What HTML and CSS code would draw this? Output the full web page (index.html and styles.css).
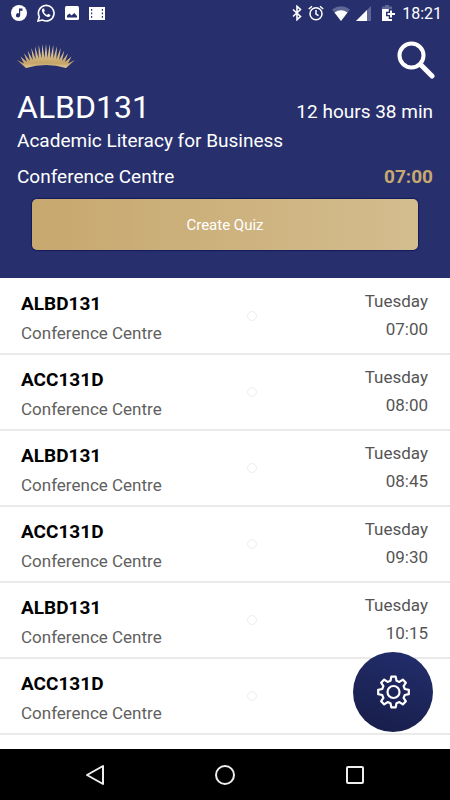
FILE: index.html
```html
<!DOCTYPE html>
<html lang="en">
<head>
<meta charset="utf-8">
<meta name="viewport" content="width=device-width, initial-scale=1">
<title>Timetable</title>
<link rel="stylesheet" href="styles.css">
</head>
<body>
<header class="top">
  <div class="status">
    <div class="status-group status-left">
      <svg width="16" height="16" viewBox="0 0 16 16"><circle cx="8" cy="8" r="8" fill="#fff"/><path d="M8 3.500h3.500v2.200H9.200v4.600a2.100 2.100 0 1 1-1.200-1.900z" fill="#27306d"/></svg>
      <svg width="18" height="18" viewBox="0 0 18 18"><path d="M1 17l1.300-4.200A7.800 7.800 0 1 1 5.400 16z" fill="none" stroke="#fff" stroke-width="1.600"/><path d="M6 4.600c-1 .6-1.300 1.600-.9 2.800 1 2.700 3 4.700 5.700 5.500 1.400.3 2.500-.4 2.700-1.900l-2.300-1.200-1.100 1.300c-1.500-.6-2.500-1.600-3.200-3l.9-1.100L7 4.600z" fill="#fff"/></svg>
      <svg width="14" height="14" viewBox="0 0 14 14"><rect width="14" height="14" rx="1.500" fill="#fff"/><path d="M2 11.500v-2L4.500 7.500l2 2L9.300 7l2.700 3v1.500z" fill="#27306d"/></svg>
      <svg width="16" height="13" viewBox="0 0 16 13"><path d="M0 0h16v13H0z" fill="#fff"/><path d="M2 2h1.200v1.700H2zM2 5.500h1.200v1.700H2zM2 9h1.200v1.700H2zM12.800 2H14v1.700h-1.200zM12.800 5.500H14v1.700h-1.200zM12.800 9H14v1.700h-1.200z" fill="#27306d"/></svg>
    </div>
    <div class="status-group status-right">
      <svg width="10" height="16" viewBox="0 0 10 16" fill="none" stroke="#fff" stroke-width="1.600"><path d="M1 4.500l7.500 7L5 14.700V1.300l3.500 3.200-7.500 7"/></svg>
      <svg width="16" height="16" viewBox="0 0 16 16" fill="none" stroke="#fff" stroke-width="1.500"><circle cx="8" cy="8.700" r="6"/><path d="M.8 4L4 1.200M15.200 4L12 1.200M8 5v4l2.500 1.700"/></svg>
      <svg class="wifi" width="18" height="15" viewBox="0 0 18 15"><path d="M0 3.500Q9-3.200 18 3.500L9 15z" fill="#5f6794"/><path d="M2.500 6.600Q9 1.800 15.500 6.600L9 15z" fill="#fff"/></svg>
      <svg width="15" height="15" viewBox="0 0 15 15"><path d="M0 15L15 0v15z" fill="#5f6794"/><path d="M0 15L11 4v11z" fill="#fff"/></svg>
      <svg class="battery" width="14" height="16" viewBox="0 0 14 16"><path d="M3 0h4v1.500h3V4H0V1.500h3z" fill="#5f6794"/><path d="M0 4h10v12H0z" fill="#fff"/><path d="M9 4v10M4 9h10" stroke="#27306d" stroke-width="4.500"/><path d="M9 5.500v7M5.500 9h7.500" stroke="#fff" stroke-width="2"/></svg>
      <time class="clock">18:21</time>
    </div>
  </div>

  <div class="brand">
    <svg class="logo" width="60" height="26" viewBox="0 0 60 26" role="img" aria-label="Sunrise logo">
      <defs><linearGradient id="gold" x1="0" y1="0" x2="0" y2="1"><stop offset="0" stop-color="#e6d6b0"/><stop offset=".8" stop-color="#c6a468"/><stop offset="1" stop-color="#e0cb9c"/></linearGradient></defs>
      <path fill="url(#gold)" d="M10 25L1 17 8 20.500 4.500 13.400 11 19 8 10.200 14 17.900 11.700 7.400 16.800 17 15.300 5.100 19.700 16.200 19 3.300 22.600 15.600 22.700 2 25.600 15.200 26.300 1.300 28.500 15 30 1 31.500 15 33.700 1.300 34.400 15.200 37.300 2 37.400 15.600 41 3.300 40.300 16.200 44.700 5.100 43.200 17 48.300 7.400 46 17.900 52 10.200 49 19 55.500 13.400 52 20.500 59 17 50 25Q30 19 10 25z"/>
    </svg>
    <button class="icon-button" type="button" aria-label="Search">
      <svg width="38" height="38" viewBox="0 0 38 38" fill="none" stroke="#fff"><circle cx="14.500" cy="14.500" r="12" stroke-width="4"/><path d="M23.500 23.500L35 35" stroke-width="5" stroke-linecap="round"/></svg>
    </button>
  </div>

  <div class="line headline"><h1>ALBD131</h1><span>12 hours 38 min</span></div>
  <p class="subject">Academic Literacy for Business</p>
  <div class="line venue"><span>Conference Centre</span><time class="next-time">07:00</time></div>
  <button class="create" type="button">Create Quiz</button>
</header>

<main>
  <ul class="list">
    <li class="row"><div><h2>ALBD131</h2><p>Conference Centre</p></div><i class="dot"></i><div class="when"><span>Tuesday</span><time>07:00</time></div></li>
    <li class="row"><div><h2>ACC131D</h2><p>Conference Centre</p></div><i class="dot"></i><div class="when"><span>Tuesday</span><time>08:00</time></div></li>
    <li class="row"><div><h2>ALBD131</h2><p>Conference Centre</p></div><i class="dot"></i><div class="when"><span>Tuesday</span><time>08:45</time></div></li>
    <li class="row"><div><h2>ACC131D</h2><p>Conference Centre</p></div><i class="dot"></i><div class="when"><span>Tuesday</span><time>09:30</time></div></li>
    <li class="row"><div><h2>ALBD131</h2><p>Conference Centre</p></div><i class="dot"></i><div class="when"><span>Tuesday</span><time>10:15</time></div></li>
    <li class="row"><div><h2>ACC131D</h2><p>Conference Centre</p></div><i class="dot"></i></li>
  </ul>
  <button class="fab" type="button" aria-label="Settings">
    <svg width="36" height="36" viewBox="-18.500 -18 36 36" fill="none" stroke="#fff" stroke-width="2.200" stroke-linejoin="round"><path d="M-3-11.300L-2.200-15.300H2.200L3-11.300 5.900-10.100 9.300-12.400 12.400-9.300 10.100-5.900 11.300-3 15.300-2.200V2.200L11.300 3 10.100 5.900 12.400 9.300 9.300 12.400 5.900 10.100 3 11.300 2.200 15.300H-2.200L-3 11.300-5.900 10.100-9.300 12.400-12.400 9.300-10.100 5.900-11.300 3-15.300 2.200V-2.200L-11.300-3-10.100-5.900-12.400-9.300-9.300-12.400-5.900-10.100z"/><circle r="6"/></svg>
  </button>
</main>

<nav class="nav" aria-label="System">
  <button type="button" aria-label="Back"><svg width="22" height="22" viewBox="0 0 22 22"><path d="M19 2v18L3 11z"/></svg></button>
  <button type="button" aria-label="Home"><svg width="22" height="22" viewBox="0 0 22 22"><circle cx="11" cy="11" r="9"/></svg></button>
  <button type="button" aria-label="Recents"><svg width="22" height="22" viewBox="0 0 22 22"><rect x="3" y="3" width="16" height="16" rx="1"/></svg></button>
</nav>
</body>
</html>
```
FILE: styles.css
```css
* { box-sizing: border-box; }
body {
  margin: 0;
  min-height: 100vh;
  display: flex;
  flex-direction: column;
  background: #fff;
  color: #000;
  font-family: Roboto, "Liberation Sans", sans-serif;
}
h1, h2, p, ul { margin: 0; padding: 0; }
button {
  border: 0;
  padding: 0;
  background: none;
  font-family: inherit;
  cursor: pointer;
}
svg { display: block; }

.top {
  padding: 0 17px 28px;
  background: #27306d;
  color: #fff;
  font-size: 19px;
}
.status {
  display: flex;
  justify-content: space-between;
  height: 26px;
  margin: 0 -9px 0 -6px;
}
.status-group { display: flex; align-items: center; }
.status-left { gap: 10px; }
.status-right { gap: 6px; }
.clock { font-size: 16px; }
.wifi { margin-left: 2px; }
.battery { margin-left: 5px; }

.brand {
  display: flex;
  justify-content: space-between;
  align-items: center;
  height: 60px;
  margin: 0 -2px 0 -1px;
}
.icon-button { margin-top: 8px; }

.line { display: flex; justify-content: space-between; }
.headline { height: 41px; align-items: center; }
.headline span { padding-top: 10px; }
h1 { font-size: 32px; font-weight: 400; line-height: 40px; }
.subject { line-height: 28px; }
.venue { line-height: 28px; margin-top: 8px; }
.next-time { color: #c8a96f; font-weight: 700; }
.create {
  display: block;
  width: calc(100% - 30px);
  height: 51px;
  margin: 8px 15px 0;
  border-radius: 5px;
  background: linear-gradient(90deg, #c7a86e, #d3bc8e);
  box-shadow: 0 0 1px 1px #131b5c;
  color: #fff;
  font-size: 15px;
}

main { position: relative; flex: 1; }
.list { list-style: none; padding-top: 1px; }
.row {
  display: grid;
  grid-template-columns: 226fr 10px 171fr;
  align-items: center;
  height: 76px;
  padding: 0 22px 0 21px;
  border-bottom: 2px solid #eaeaea;
}
h2 { padding-top: 4px; font-size: 19px; font-weight: 700; line-height: 29px; }
.row p { color: #606060; font-size: 17px; line-height: 30px; }
.dot {
  width: 10px;
  height: 10px;
  border: 1px solid #eee;
  border-radius: 50%;
}
.when {
  display: flex;
  flex-direction: column;
  padding-bottom: 2px;
  text-align: right;
  color: #555;
  font-size: 17px;
  line-height: 28px;
}
.fab {
  position: absolute;
  right: 17px;
  bottom: 17px;
  display: grid;
  place-items: center;
  width: 80px;
  height: 80px;
  border-radius: 50%;
  background: linear-gradient(200deg, #232e6d, #171d48);
}

.nav {
  display: flex;
  justify-content: center;
  gap: 108px;
  height: 51px;
  background: #000;
}
.nav svg { fill: none; stroke: #eee; stroke-width: 2; stroke-linejoin: round; }
```
